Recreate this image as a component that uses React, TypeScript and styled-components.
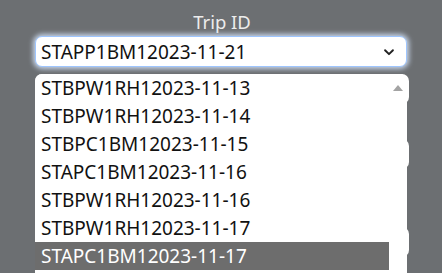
import * as React from 'react';
import styled, { createGlobalStyle } from 'styled-components';

const trips = [
  'STBPW1RH12023-11-13',
  'STBPW1RH12023-11-14',
  'STBPC1BM12023-11-15',
  'STAPC1BM12023-11-16',
  'STBPW1RH12023-11-16',
  'STBPW1RH12023-11-17',
  'STAPC1BM12023-11-17',
];

export default function App() {
  return (
    <>
      <GlobalStyle />
      <Page>
        <Form>
          <FieldLabel>Trip ID</FieldLabel>
          <SelectBox>
            <SelectValue>STAPP1BM12023-11-21</SelectValue>
            <Chevron viewBox="0 0 16 16">
              <path d="M3.5 6l4.5 4.5L12.5 6" fill="none" stroke="#222" strokeWidth="2.2" strokeLinecap="round" strokeLinejoin="round" />
            </Chevron>
          </SelectBox>
          <Input $gap={7} />
          <Input $gap={35} />
          <Input $gap={58} />
          <Popup>
            <OptionList>
              {trips.map((t, i) => (
                <Option key={t + i} $active={i === 6}>
                  {t}
                </Option>
              ))}
            </OptionList>
            <ScrollTrack>
              <ScrollArrow viewBox="0 0 10 6">
                <path d="M5 0L10 6H0z" fill="#a3a3a3" />
              </ScrollArrow>
            </ScrollTrack>
          </Popup>
        </Form>
      </Page>
    </>
  );
}

const GlobalStyle = createGlobalStyle`
  body {
    margin: 0;
    background: #6c6f72;
    font-family: "Noto Sans", "Open Sans", sans-serif;
  }
`;

const Page = styled.div`
  width: 442px;
  height: 273px;
  overflow: hidden;
  padding-top: 9px;
  box-sizing: border-box;
`;

const Form = styled.div`
  position: relative;
  margin-left: 35px;
  width: 374px;
  display: flex;
  flex-direction: column;
`;

const FieldLabel = styled.div`
  color: #ececec;
  font-size: 18.5px;
  line-height: 26px;
  text-align: center;
  margin-bottom: 1px;
`;

const SelectBox = styled.div`
  width: 372px;
  height: 31px;
  box-sizing: border-box;
  background: #fff;
  border: 1px solid #9ec5fe;
  border-radius: 7px;
  box-shadow: 0 0 5px 2px rgba(215, 232, 255, 0.85);
  display: flex;
  align-items: center;
  justify-content: space-between;
  padding: 0 10px 0 5px;
`;

const SelectValue = styled.span`
  font-size: 19px;
  color: #111;
`;

const Chevron = styled.svg`
  width: 14px;
  height: 14px;
`;

const Input = styled.div<{ $gap: number }>`
  height: 30px;
  background: #fff;
  border-radius: 7px;
  margin-top: ${(p) => p.$gap}px;
`;

const Popup = styled.div`
  position: absolute;
  top: 65px;
  left: 0;
  width: 372px;
  height: 220px;
  background: #fff;
  border-radius: 7px 7px 0 0;
  overflow: hidden;
  display: flex;
`;

const OptionList = styled.div`
  flex: 1;
  display: flex;
  flex-direction: column;
`;

const Option = styled.div<{ $active?: boolean }>`
  height: 28px;
  line-height: 28px;
  padding-left: 6px;
  font-size: 19px;
  color: ${(p) => (p.$active ? '#fff' : '#111')};
  background: ${(p) => (p.$active ? '#6d6d6d' : 'transparent')};
  flex-shrink: 0;
`;

const ScrollTrack = styled.div`
  width: 18px;
  display: flex;
  justify-content: center;
  padding-top: 11px;
`;

const ScrollArrow = styled.svg`
  width: 10px;
  height: 6px;
`;
